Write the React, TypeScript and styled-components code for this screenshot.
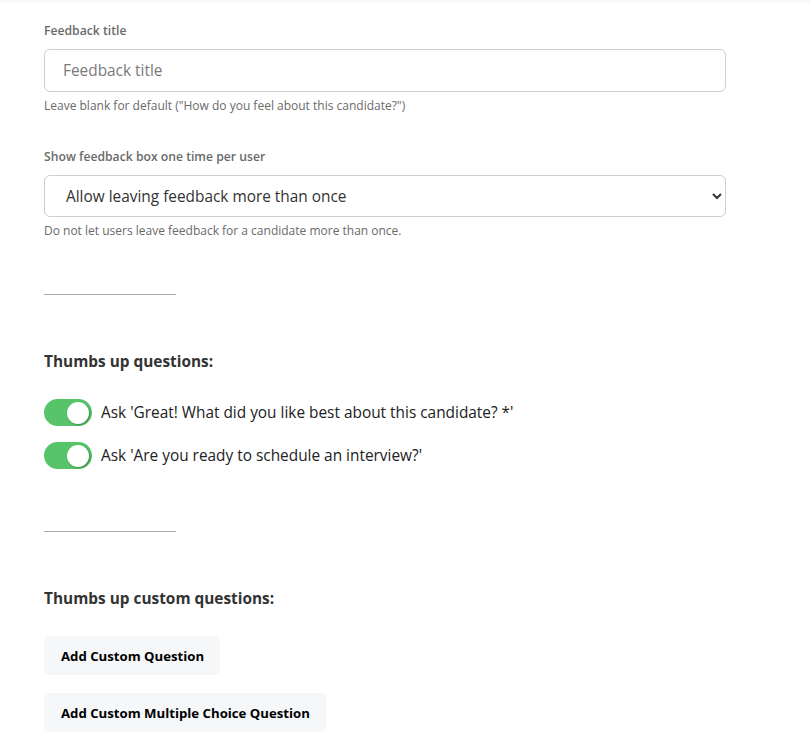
import React from "react";
import styled, { createGlobalStyle } from "styled-components";

const Global = createGlobalStyle`
  html, body { margin: 0; padding: 0; background: #fff; }
  body { font-family: "Open Sans", "Liberation Sans", sans-serif; }
  * { box-sizing: border-box; }
`;

const Page = styled.div`
  width: 810px;
  min-height: 754px;
  padding: 23px 0 0 44px;
  background: linear-gradient(#f6f6f6, #fff 4px);
`;

const Field = styled.div<{ $top?: number }>`
  width: 682px;
  display: flex;
  flex-direction: column;
  margin-top: ${(p) => p.$top ?? 0}px;
`;

const Label = styled.label`
  font-size: 12.2px;
  font-weight: 600;
  color: #6a6a6a;
  line-height: 16px;
  margin-bottom: 10px;
`;

const Input = styled.input`
  height: 43px;
  border: 1px solid #cfcfcf;
  border-radius: 6px;
  padding: 0 18px;
  font-family: inherit;
  font-size: 15.4px;
  color: #333;
  outline: none;
  &::placeholder { color: #7a7a7a; }
`;

const Select = styled.select`
  height: 42px;
  border: 1px solid #cfcfcf;
  border-radius: 6px;
  padding: 0 10px 0 17px;
  font-family: inherit;
  font-size: 15.4px;
  color: #333;
  background: #fff;
  outline: none;
`;

const Help = styled.div`
  font-size: 12px;
  color: #6a6a6a;
  line-height: 16px;
  margin-top: 6px;
`;

const Divider = styled.hr<{ $top: number }>`
  width: 132px;
  margin: ${(p) => p.$top}px 0 0 0;
  border: none;
  border-top: 1px solid #aaaaaa;
  height: 0;
`;

const Heading = styled.h3<{ $top: number }>`
  margin: ${(p) => p.$top}px 0 0 0;
  font-size: 15.4px;
  font-weight: 700;
  color: #333;
  line-height: 20px;
`;

const ToggleList = styled.div`
  display: flex;
  flex-direction: column;
  gap: 16px;
  margin-top: 27px;
`;

const ToggleRow = styled.div`
  display: flex;
  align-items: center;
  gap: 9px;
  font-size: 15.4px;
  color: #222;
`;

const Track = styled.span<{ $on: boolean }>`
  width: 48px;
  height: 27px;
  border-radius: 14px;
  background: ${(p) => (p.$on ? "#57c46a" : "#ccc")};
  display: flex;
  align-items: center;
  justify-content: ${(p) => (p.$on ? "flex-end" : "flex-start")};
  padding: 0 3px;
  flex: none;
`;

const Knob = styled.span`
  width: 22px;
  height: 22px;
  border-radius: 50%;
  background: #fff;
  box-shadow: 1px 1px 2px rgba(0, 0, 0, 0.3);
`;

const ButtonList = styled.div`
  display: flex;
  flex-direction: column;
  align-items: flex-start;
  gap: 18px;
  margin-top: 27px;
`;

const Button = styled.button`
  height: 39px;
  padding: 0 16px 0 17px;
  border: none;
  border-radius: 5px;
  background: #f6f7f9;
  font-family: inherit;
  font-size: 13.2px;
  font-weight: 700;
  color: #000;
`;

const Toggle = ({ label }: { label: string }) => (
  <ToggleRow>
    <Track $on>
      <Knob />
    </Track>
    {label}
  </ToggleRow>
);

export default function App() {
  return (
    <>
      <Global />
      <Page>
        <Field>
          <Label>Feedback title</Label>
          <Input placeholder="Feedback title" />
          <Help>Leave blank for default ("How do you feel about this candidate?")</Help>
        </Field>
        <Field $top={35}>
          <Label>Show feedback box one time per user</Label>
          <Select defaultValue="allow">
            <option value="allow">Allow leaving feedback more than once</option>
            <option value="once">Show only once</option>
          </Select>
          <Help>Do not let users leave feedback for a candidate more than once.</Help>
        </Field>
        <Divider $top={55} />
        <Heading $top={57}>Thumbs up questions:</Heading>
        <ToggleList>
          <Toggle label="Ask 'Great! What did you like best about this candidate? *'" />
          <Toggle label="Ask 'Are you ready to schedule an interview?'" />
        </ToggleList>
        <Divider $top={62} />
        <Heading $top={57}>Thumbs up custom questions:</Heading>
        <ButtonList>
          <Button>Add Custom Question</Button>
          <Button>Add Custom Multiple Choice Question</Button>
        </ButtonList>
      </Page>
    </>
  );
}
